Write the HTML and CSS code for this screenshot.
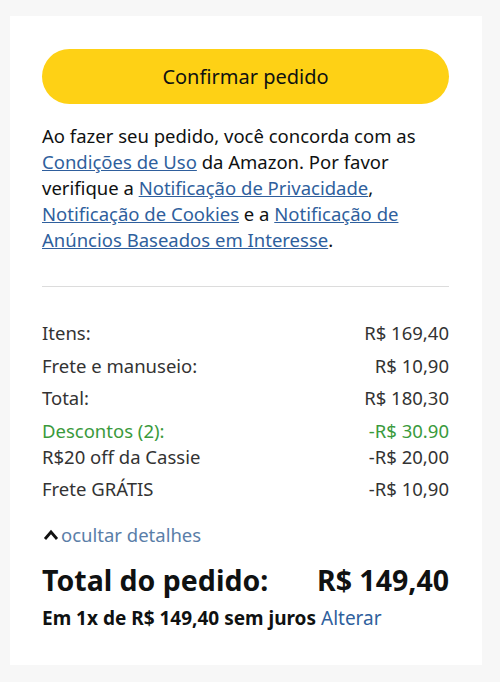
FILE: index.html
```html
<!DOCTYPE html>
<html lang="pt-BR">

<head>
  <meta charset="UTF-8">
  <meta name="viewport" content="width=device-width, initial-scale=1.0">
  <title>Confirmar pedido</title>
  <link rel="stylesheet" href="styles.css">
</head>

<body>
  <div class="card">
    <button class="btn-confirm">Confirmar pedido</button>

    <p class="terms">
      Ao fazer seu pedido, você concorda com as
      <a href="#">Condições de Uso</a> da Amazon. Por favor
      verifique a <a href="#">Notificação de Privacidade</a>,
      <a href="#">Notificação de Cookies</a> e a <a href="#">Notificação de
      Anúncios Baseados em Interesse</a>.
    </p>

    <hr class="divider">

    <div class="summary">
      <div class="row"><span>Itens:</span><span>R$ 169,40</span></div>
      <div class="row"><span>Frete e manuseio:</span><span>R$ 10,90</span></div>
      <div class="row"><span>Total:</span><span>R$ 180,30</span></div>
      <div class="row row-green"><span>Descontos (2):</span><span>-R$ 30.90</span></div>
      <div class="row"><span>R$20 off da Cassie</span><span>-R$ 20,00</span></div>
      <div class="row"><span>Frete GRÁTIS</span><span>-R$ 10,90</span></div>
    </div>

    <a class="toggle" href="#">
      <svg width="18" height="14" viewBox="0 0 18 14">
        <polyline points="3,11 9,4 15,11" fill="none" stroke="#111" stroke-width="2.8" />
      </svg>ocultar detalhes
    </a>

    <div class="grand">
      <span>Total do pedido:</span>
      <span>R$ 149,40</span>
    </div>

    <div class="install">Em 1x de R$ 149,40 sem juros <a href="#">Alterar</a></div>
  </div>
</body>

</html>
```

FILE: styles.css
```css
body {
  margin: 0;
  background: #f7f7f7;
  font-family: "Noto Sans", "Open Sans", sans-serif;
  color: #0f1111;
}

.card {
  width: 472px;
  margin: 16px 0 0 10px;
  padding: 33px 33px 30px 32px;
  box-sizing: border-box;
  background: #fff;
  min-height: 649px;
}

.btn-confirm {
  display: block;
  width: 100%;
  height: 55px;
  border: none;
  border-radius: 28px;
  background: #fed115;
  font-family: inherit;
  font-size: 20px;
  color: #0f1111;
  cursor: pointer;
}

.terms {
  margin: 19px 0 0;
  font-size: 18.5px;
  line-height: 26px;
  color: #0f1111;
}

.terms a {
  color: #2f5f9d;
  text-decoration: underline;
}

.divider {
  margin: 33px 0 0;
  border: none;
  border-top: 1px solid #dcdcdc;
}

.summary {
  margin-top: 35px;
  font-size: 18.5px;
  color: #333;
}

.row {
  display: flex;
  justify-content: space-between;
  line-height: 22px;
  margin-bottom: 10.5px;
}

.row-green {
  color: #3a9a3c;
  margin-bottom: 4px;
}

.toggle {
  display: flex;
  align-items: center;
  gap: 1px;
  margin-top: 24px;
  font-size: 18.5px;
  line-height: 22px;
  color: #5a7ea8;
  text-decoration: none;
}

.grand {
  display: flex;
  justify-content: space-between;
  margin-top: 16px;
  font-size: 28.5px;
  font-weight: bold;
  line-height: 36px;
}

.install {
  margin-top: 8px;
  font-size: 19px;
  font-weight: bold;
  line-height: 24px;
}

.install a {
  font-weight: normal;
  color: #2f5f9d;
  text-decoration: none;
}
```
